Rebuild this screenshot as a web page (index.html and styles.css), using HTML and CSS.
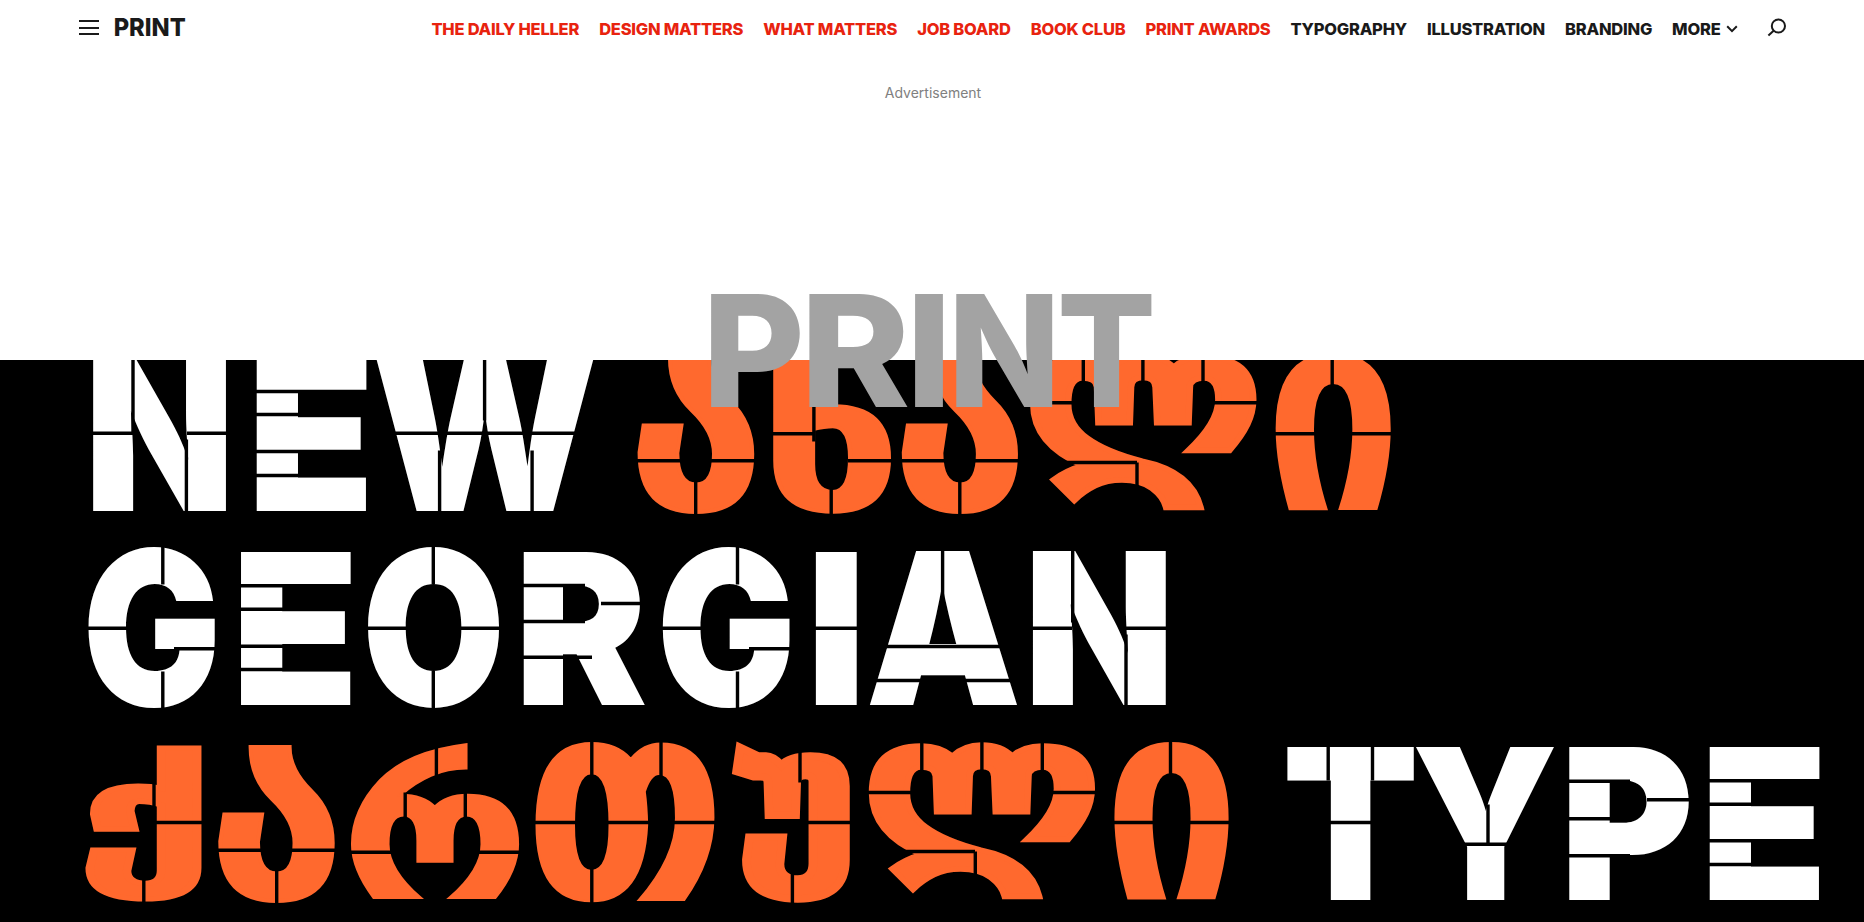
FILE: index.html
```html
<!DOCTYPE html>
<html lang="en">
<head>
<meta charset="utf-8">
<title>PRINT Magazine</title>
<link rel="stylesheet" href="styles.css">
</head>
<body>
<header class="bar">
  <div class="brand">
    <button class="burger" aria-label="Menu"><span></span><span></span><span></span></button>
    <svg class="brand-logo" width="72" height="20"><text class="fit" data-box="0 1 70 18">PRINT</text></svg>
  </div>
  <nav class="nav">
    <a class="hot">THE DAILY HELLER</a>
    <a class="hot">DESIGN MATTERS</a>
    <a class="hot">WHAT MATTERS</a>
    <a class="hot">JOB BOARD</a>
    <a class="hot">BOOK CLUB</a>
    <a class="hot">PRINT AWARDS</a>
    <a>TYPOGRAPHY</a>
    <a>ILLUSTRATION</a>
    <a>BRANDING</a>
    <a>MORE</a>
    <svg class="chevron" width="12" height="8" viewBox="0 0 12 8"><path d="M1.2 1.3 6 6.1l4.8-4.8"/></svg>
    <svg class="search" width="20" height="20" viewBox="0 0 20 20"><circle cx="11.4" cy="8" r="6.6"/><path d="M6.6 12.7 1.4 17.6"/></svg>
  </nav>
</header>
<div class="ad"><p class="ad-label">Advertisement</p></div>
<main class="hero">
  <svg class="art" width="1864" height="562" viewBox="0 359.5 1864 562">
    <g class="latin">
      <text class="fit" data-box="92.9 356 133.5 154">N</text>
      <text class="fit" data-box="256.4 356 110.7 154">E</text>
      <text class="fit" data-box="375.8 356 218 154">W</text>
      <text class="fit" data-box="87.7 547 127.3 160.5">G</text>
      <text class="fit" data-box="240.7 550.3 110.7 154">E</text>
      <text class="fit" data-box="367.2 547 132.5 160.5">O</text>
      <text class="fit" data-box="523.4 550.3 122.2 154">R</text>
      <text class="fit" data-box="662.1 547 127.8 160.5">G</text>
      <text class="fit" data-box="815.6 550.3 41.3 154">I</text>
      <text class="fit" data-box="869.5 550.3 148.1 154">A</text>
      <text class="fit" data-box="1032.5 550.3 133.6 154">N</text>
      <text class="fit" data-box="1287.1 745 126.9 154">T</text>
      <text class="fit" data-box="1415.6 745 138.8 154">Y</text>
      <text class="fit" data-box="1569 745 120.6 154">P</text>
      <text class="fit" data-box="1709.4 745 110.7 154">E</text>
    </g>
    <g class="georgian" lang="ka">
      <text class="fit" data-box="636.6 356 117.7 157.3" data-stroke="4">ა</text>
      <text class="fit" data-box="772.6 356 118.2 157.3" data-stroke="4">ხ</text>
      <text class="fit" data-box="900.7 356 117.2 157.3" data-stroke="4">ა</text>
      <text class="fit" data-box="1029.4 353 228 156.7" data-stroke="6">ლ</text>
      <text class="fit" data-box="1274.7 353 116.1 156.7">ი</text>
      <text class="fit" data-box="85.3 745 116.3 157" data-stroke="7">ქ</text>
      <text class="fit" data-box="217.4 745 117.4 157" data-stroke="4">ა</text>
      <text class="fit" data-box="350.2 742 168.8 157" data-stroke="3">რ</text>
      <text class="fit" data-box="534.5 742 180.2 160" data-stroke="2">თ</text>
      <text class="fit" data-box="731.6 742 118.2 160" data-stroke="8">უ</text>
      <text class="fit" data-box="868.2 742 227.7 157" data-stroke="6">ლ</text>
      <text class="fit" data-box="1113.5 742 115.2 157">ი</text>
    </g>
    <!-- stencil bridges, one line per letter -->
    <g class="cuts">
      <path d="M92 432.7H133M187 432.7H228M133 356V431M186.4 439V511"/>
      <path d="M256 391H368M256 414H368M256 451H368M256 475H368"/>
      <path d="M376 432.7H594M484.6 356V420M439.6 450V511M532.1 450V511"/>
      <path d="M87 627.7H130M162.8 546V584M162.8 671V708M174 648.3H216"/>
      <path d="M240 585.3H352M240 608.7H352M240 645.7H352M240 669H352"/>
      <path d="M366 627.7H501M433.3 546V584M433.3 670V708"/>
      <path d="M523 585H585M523 621H585M523 656.7H592M601 603H646"/>
      <path d="M661 627.7H704M737.5 546V584M737.5 671V708M749 648.3H791"/>
      <path d="M815 627.7H858"/>
      <path d="M869 646H1018M869 680H1018M942.6 550V606"/>
      <path d="M1032 627.7H1072M1126 627.7H1168M1072.7 550V622M1126 634V705"/>
      <path d="M1328.2 744V780M1372.5 744V780M1328 822H1373"/>
      <path d="M1488 804V843M1455 843.7H1520"/>
      <path d="M1568 780.7H1630M1568 818.3H1630M1568 855.3H1630M1647 799.3H1691"/>
      <path d="M1709 780.3H1821M1709 803.7H1821M1709 840.3H1821M1709 864H1821"/>
      <path d="M636 460.3H755M695.7 475V514"/>
      <path d="M772 433.3H813M848 460.3H892M831.2 475V514M813.9 400V441"/>
      <path d="M900 460.3H1019M959.8 475V514"/>
      <path d="M1083.3 353V389M1142.9 353V389M1203 353V389M1029 402.3H1076M1210 402.3H1258M1049 462H1137M1137 462V493"/>
      <path d="M1332.2 353V387M1274 433.3H1392"/>
      <path d="M154 745V822M154 822H203M143.8 864V903"/>
      <path d="M217 849.7H335M276.7 864V903"/>
      <path d="M436.4 741V785M405.2 792V829M465.3 792V829M350 851.7H400M470 851.7H520"/>
      <path d="M591.8 741V782M661 741V782M591.8 862V903M534 822H716"/>
      <path d="M800 741V782M792.4 864V903M803 822H851"/>
      <path d="M921.8 741V780M981.9 741V780M1042.3 741V780M868 792H914M1049 792H1097M889 851H975M975.3 851V883"/>
      <path d="M1170.5 741V779M1113 822H1230"/>
    </g>
  </svg>
  <svg class="masthead" width="444" height="116" viewBox="709 292 444 116">
    <text class="fit" data-box="710.9 293 88.9 113.7">P</text>
    <text class="fit" data-box="809.2 293 98.3 113.7">R</text>
    <text class="fit" data-box="914.9 293 28.2 113.7">I</text>
    <text class="fit" data-box="956.2 293 96.2 113.7">N</text>
    <text class="fit" data-box="1061.3 293 90 113.7">T</text>
  </svg>
</main>
<script src="fit.js"></script>
</body>
</html>
```
FILE: fit.js
```js
// Scales each .fit text so that its inked area fills its data-box (x y w h).
const SIZE = 200;
const ctx = document.createElement('canvas').getContext('2d');
document.querySelectorAll('.fit').forEach((el) => {
  const cs = getComputedStyle(el);
  const [x, y, w, h] = el.dataset.box.split(' ').map(Number);
  const s = Number(el.dataset.stroke || 0);
  ctx.font = `${cs.fontWeight} ${SIZE}px ${cs.fontFamily}`;
  const m = ctx.measureText(el.textContent);
  const sx = (w - s) / (m.actualBoundingBoxLeft + m.actualBoundingBoxRight);
  const sy = (h - s) / (m.actualBoundingBoxAscent + m.actualBoundingBoxDescent);
  const tx = x + s / 2 + m.actualBoundingBoxLeft * sx;
  const ty = y + s / 2 + m.actualBoundingBoxAscent * sy;
  el.setAttribute('transform', `matrix(${sx} 0 0 ${sy} ${tx} ${ty})`);
  el.style.strokeWidth = s;
});
```
FILE: styles.css
```css
* { box-sizing: border-box; }
body {
  margin: 0;
  height: 922px;
  overflow: hidden;
  background: #fff;
  color: #1a1a1a;
  font-family: Inter, "Liberation Sans", sans-serif;
}
.bar {
  display: flex;
  justify-content: space-between;
  align-items: flex-start;
  height: 56px;
  padding: 17px 77px 0 79px;
}
.brand { display: flex; align-items: flex-start; gap: 16px; }
.burger {
  display: flex;
  flex-direction: column;
  gap: 4.5px;
  width: 20px;
  margin-top: 3px;
  padding: 0;
  border: 0;
  background: none;
}
.burger span { height: 2px; background: #1a1a1a; }
.brand-logo { display: block; overflow: visible; fill: #1a1a1a; }
.brand-logo .fit { font-weight: 800; }
.nav {
  display: flex;
  align-items: flex-start;
  gap: 20px;
  font-size: 16.5px;
  font-weight: 800;
  line-height: 24px;
  letter-spacing: -0.23px;
  white-space: nowrap;
}
.nav .hot { color: #e8230f; }
.chevron { margin: 8px 9px 0 -14.5px; }
.search { margin-top: 1px; }
.chevron, .search { fill: none; stroke: #1a1a1a; stroke-width: 2; }
.ad { height: 304px; padding-top: 27px; }
.ad-label {
  margin: 0;
  padding-left: 2px;
  text-align: center;
  font-size: 14px;
  line-height: 20px;
  color: #808080;
}
.hero { position: relative; height: 562px; background: #000; }
.art { display: block; }
.masthead { position: absolute; left: 709px; top: -68px; overflow: visible; fill: #a3a3a3; }
.fit {
  font-family: Inter, sans-serif;
  font-size: 200px;
  font-weight: 900;
  vector-effect: non-scaling-stroke;
}
.masthead .fit { font-weight: 800; }
.latin { fill: #fff; }
.georgian { fill: #ff692e; stroke: #ff692e; stroke-linejoin: miter; }
.georgian .fit { font-family: "DejaVu Sans", sans-serif; font-weight: 700; }
.cuts { fill: none; stroke: #000; stroke-width: 3.4; }
```
